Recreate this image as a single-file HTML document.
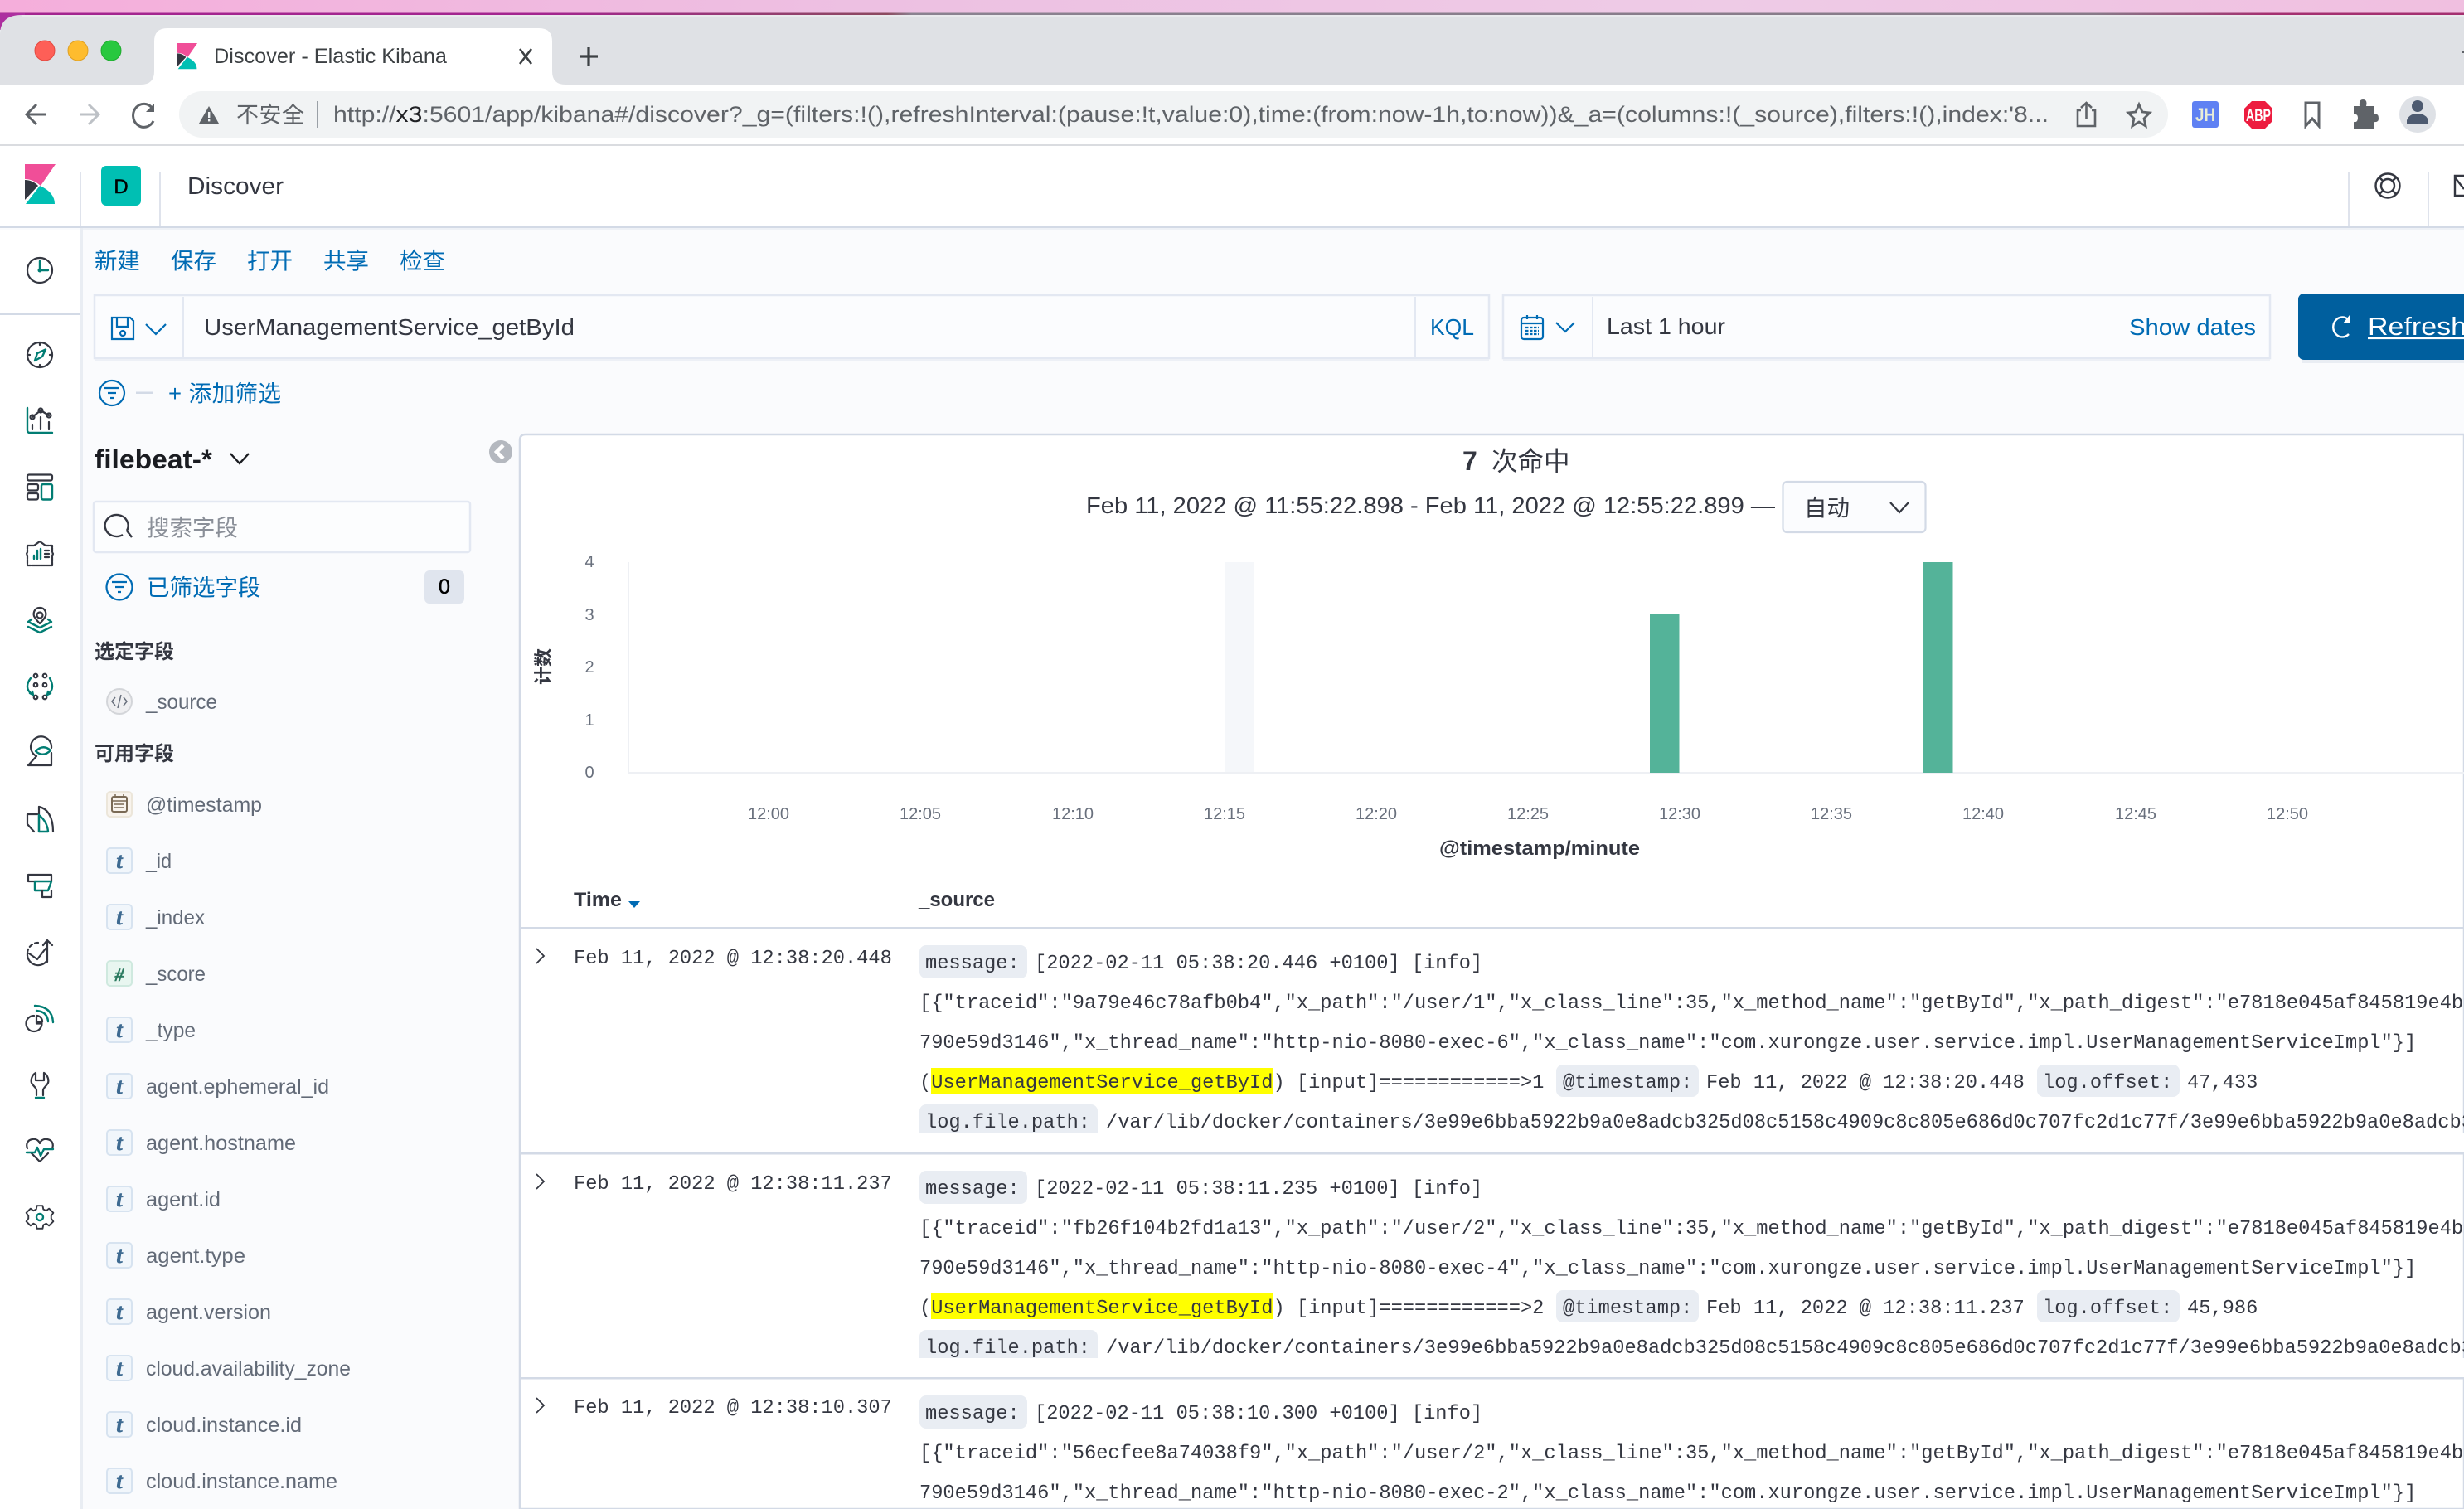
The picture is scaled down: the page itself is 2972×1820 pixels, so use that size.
<!DOCTYPE html>
<html lang="zh">
<head>
<meta charset="utf-8">
<title>Discover - Elastic Kibana</title>
<style>
html,body{margin:0;padding:0;background:#fafbfd;overflow:hidden;width:2972px;height:1820px}
svg{display:block}
text{font-family:"Liberation Sans","Noto Sans CJK SC",sans-serif;white-space:pre}
.m{font-family:"Liberation Mono","Noto Sans CJK SC",monospace;font-size:23.7px;fill:#343741}
.f{font-size:25px;fill:#626a77}
.ax{font-size:20px;fill:#69707d}
.box{fill:#f1f6fb;stroke:#d7e3f0;stroke-width:2}
.tt{font-family:"Liberation Serif",serif;font-weight:bold;font-style:italic;font-size:27px;fill:#3d6a91;stroke:#3d6a91;stroke-width:.5px}
.tag{fill:#e9edf3}
.d{fill:none;stroke:#343741;stroke-width:2.2;stroke-linecap:round;stroke-linejoin:round}
.g{fill:none;stroke:#017d73;stroke-width:2.4;stroke-linecap:round;stroke-linejoin:round}
</style>
</head>
<body>
<svg width="2972" height="1820" viewBox="0 0 2972 1820" xmlns="http://www.w3.org/2000/svg">
<defs>
<linearGradient id="pk" x1="0" x2="1" y1="0" y2="0">
<stop offset="0" stop-color="#f5aedb"/><stop offset=".35" stop-color="#edc0e2"/><stop offset=".7" stop-color="#eecbe6"/><stop offset="1" stop-color="#f0bfe0"/>
</linearGradient>
<linearGradient id="ln" x1="0" x2="1" y1="0" y2="0">
<stop offset="0" stop-color="#a3258f"/><stop offset=".22" stop-color="#a3258f"/><stop offset=".36" stop-color="#8c4a60"/><stop offset=".37" stop-color="#8a8290"/><stop offset=".85" stop-color="#877a88"/><stop offset=".92" stop-color="#a43070"/><stop offset="1" stop-color="#a43070"/>
</linearGradient>
</defs>

<!-- desktop strip -->
<rect width="2972" height="20" fill="url(#pk)"/>
<rect y="15.500" width="2972" height="2.500" fill="url(#ln)"/>
<rect y="16" width="30" height="20" fill="#ad2f9f"/>
<!-- chrome tab strip -->
<path d="M0 102V42Q0 18 26 18H2972V102Z" fill="#dfe1e5"/>
<rect y="18" x="26" width="2946" height="2" fill="#e9eaed"/>
<circle cx="54" cy="61" r="12" fill="#fe5f57" stroke="#e2483f" stroke-width="1"/>
<circle cx="94" cy="61" r="12" fill="#febc2e" stroke="#dfa023" stroke-width="1"/>
<circle cx="134" cy="61" r="12" fill="#28c83f" stroke="#1fab2f" stroke-width="1"/>
<path d="M170 102Q186 102 186 86V50Q186 34 202 34H650Q666 34 666 50V86Q666 102 682 102Z" fill="#fff"/>
<!-- favicon -->
<g transform="translate(214 52) scale(.65)">
<path d="M0 0H37L19 26Q10 18 0 18Z" fill="#f04e98"/>
<path d="M0 19Q9 19 16 26L0 43Z" fill="#343741"/>
<path d="M1 48L18 26Q36 34 36 48Z" fill="#00bfb3"/>
</g>
<text x="258" y="76" font-size="25" fill="#3c4043" textLength="281" lengthAdjust="spacingAndGlyphs">Discover - Elastic Kibana</text>
<path d="M627 59L641 77M641 59L627 77" fill="none" stroke="#3c4043" stroke-width="2.600"/>
<path d="M710 57V79M699 68H721" fill="none" stroke="#3c4043" stroke-width="3.200"/>
<rect x="2970" y="61" width="2" height="3" fill="#5f6368"/>

<!-- toolbar -->
<rect y="102" width="2972" height="72" fill="#fff"/>
<rect y="174" width="2972" height="2" fill="#dadce0"/>
<path d="M56 138H33M44 126L32 138L44 150" fill="none" stroke="#5f6368" stroke-width="3"/>
<path d="M96 138H119M107 126L119 138L107 150" fill="none" stroke="#bdc1c6" stroke-width="3"/>
<path d="M184 131A13 14 0 1 0 185 146" fill="none" stroke="#5f6368" stroke-width="3"/>
<path d="M186 125V135H176Z" fill="#5f6368"/>
<rect x="216" y="110" width="2399" height="56" rx="28" fill="#f1f3f4"/>
<path d="M252 128L264 149H240Z" fill="#5f6368"/>
<rect x="251" y="135" width="2.400" height="7" fill="#f1f3f4"/><rect x="251" y="144" width="2.400" height="2.400" fill="#f1f3f4"/>
<text x="285" y="148" font-size="27" fill="#5f6368" textLength="82">不安全</text>
<rect x="382" y="122" width="2" height="32" fill="#9aa0a6"/>
<text x="402" y="147" font-size="27" fill="#5f6368" textLength="2069" lengthAdjust="spacingAndGlyphs">http://<tspan fill="#202124">x3</tspan>:5601/app/kibana#/discover?_g=(filters:!(),refreshInterval:(pause:!t,value:0),time:(from:now-1h,to:now))&amp;_a=(columns:!(_source),filters:!(),index:'8...</text>
<path d="M2510 133H2506V152H2527V133H2523M2516.500 143V125M2510 130L2516.500 124L2523 130" fill="none" stroke="#5f6368" stroke-width="2.600"/>
<path d="M2580 126L2584 135L2593 136L2586 143L2588 152L2580 147L2572 152L2574 143L2567 136L2576 135Z" fill="none" stroke="#5f6368" stroke-width="2.800"/>
<rect x="2644" y="122" width="32" height="32" rx="3" fill="#5f81f3"/>
<text x="2660" y="146" font-size="22" font-weight="bold" fill="#e9edd7" text-anchor="middle" textLength="24" lengthAdjust="spacingAndGlyphs">JH</text>
<path d="M2716 122H2732L2741 131V146L2732 155H2716L2707 146V131Z" fill="#ed1c3f"/>
<text x="2724" y="146" font-size="21" font-weight="bold" fill="#fff" text-anchor="middle" textLength="30" lengthAdjust="spacingAndGlyphs">ABP</text>
<path d="M2781 124H2797V152L2789 143L2781 152Z" fill="none" stroke="#5f6368" stroke-width="3"/>
<path d="M2839 131H2846Q2845 123 2850 123Q2856 123 2854 131H2863V141Q2869 139 2869 146Q2869 151 2863 150V159H2839V150Q2844 151 2844 145Q2844 140 2839 141Z" fill="#5f6368" transform="translate(0 -3)"/>
<circle cx="2916" cy="138" r="22" fill="#dee1e6"/>
<circle cx="2916" cy="128" r="7" fill="#4d5a70"/>
<path d="M2903 150V145Q2906 137 2916 137Q2926 137 2929 145V150Z" fill="#4d5a70"/>

<!-- kibana header -->
<rect y="176" width="2972" height="96" fill="#fff"/>
<rect y="272" width="2972" height="3" fill="#d3dae6"/>
<rect y="275" x="97" width="2875" height="3" fill="#eef1f6"/>
<g transform="translate(30 198)">
<path d="M0 0H37L19 26Q10 18 0 18Z" fill="#f04e98"/>
<path d="M0 19Q9 19 16 26L0 43Z" fill="#343741"/>
<path d="M1 48L18 26Q36 34 36 48Z" fill="#00bfb3"/>
</g>
<rect x="96" y="208" width="2" height="64" fill="#dfe3ec"/>
<rect x="192" y="208" width="2" height="64" fill="#dfe3ec"/>
<rect x="122" y="200" width="48" height="48" rx="6" fill="#00bfb3"/>
<text x="146" y="233" font-size="24" fill="#000" stroke="#000" stroke-width=".4" text-anchor="middle">D</text>
<text x="226" y="234" font-size="28.500" fill="#343741" textLength="116" lengthAdjust="spacingAndGlyphs">Discover</text>
<rect x="2832" y="208" width="2" height="64" fill="#dfe3ec"/>
<rect x="2928" y="208" width="2" height="64" fill="#dfe3ec"/>
<circle cx="2880" cy="224" r="14.500" fill="none" stroke="#343741" stroke-width="2.400"/>
<circle cx="2880" cy="224" r="8" fill="none" stroke="#343741" stroke-width="2.400"/>
<path d="M2870 214L2875 219M2890 214L2885 219M2870 234L2875 229M2890 234L2885 229" stroke="#343741" stroke-width="2.400"/>
<path d="M2972 212H2961V236H2972M2961 214L2972 228" fill="none" stroke="#343741" stroke-width="2.400"/>

<!-- left nav -->
<rect y="278" width="97" height="1542" fill="#fff"/>
<rect x="97" y="275" width="3" height="1545" fill="#e9edf3"/>
<rect y="377" width="97" height="3" fill="#d3dae6"/>

<!-- recent -->
<circle cx="48" cy="326" r="15" class="d"/>
<path d="M48 315V326H58" class="g"/><circle cx="48" cy="326" r="2.500" fill="#017d73"/>
<!-- discover -->
<circle cx="48" cy="428" r="15" class="d"/>
<path d="M48 413V416M48 440V443M33 428H36M60 428H63" class="d"/>
<path d="M55 421.500L51 430L42 435L45 426Z" class="g"/>
<!-- visualize -->
<path d="M33 492V519Q33 522 36 522H63" class="g"/>
<path d="M39 503L49 495L59 501" class="d"/>
<circle cx="39" cy="503" r="2.500" class="d"/><circle cx="49" cy="495" r="2.500" class="d"/><circle cx="59" cy="501" r="2.500" class="d"/>
<path d="M39 512V518M49 503V518M59 509V518" class="d"/>
<!-- dashboard -->
<rect x="33" y="572.500" width="30" height="7" rx="2" class="d"/>
<rect x="33" y="584" width="13" height="7.500" rx="2" class="d"/>
<rect x="33" y="595" width="13" height="7.500" rx="2" class="d"/>
<rect x="50" y="584" width="13" height="18.500" rx="2" class="g"/>
<!-- canvas -->
<path d="M33 658H41L48 653L55 658H63V666L64 668L63 670V682H33V670L32 668L33 666Z" class="d" stroke-dasharray="5 1"/>
<path d="M41 670V674M45 664V674M49 662V674" class="g"/>
<path d="M54 664H59M54 668H59M54 672H59" class="d"/>
<!-- maps -->
<path d="M48 733C41 733 40 740 41 743C43 747 48 752 48 752C48 752 53 747 55 743C56 740 55 733 48 733Z" class="d"/>
<circle cx="48" cy="742" r="3.500" class="d"/>
<path d="M38 747L34 750L48 757L62 750L58 747M34 756L48 763L62 756" class="g"/>
<!-- ml -->
<circle cx="43" cy="815" r="2.300" class="d"/><circle cx="54" cy="815" r="2.300" class="d"/>
<circle cx="43" cy="826" r="2.300" class="d"/><circle cx="54" cy="826" r="2.300" class="d"/>
<circle cx="43" cy="841" r="2.300" class="d"/><circle cx="54" cy="841" r="2.300" class="d"/>
<path d="M37 818Q33 823 33 828Q33 834 40 838M36 836L40 838L39 834M60 818Q63 823 63 828Q63 834 57 838M61 836L57 838L58 834" class="g"/>
<!-- graph -->
<path d="M62 908V923H34L44 912A12.500 12.500 0 1 1 62 902" class="d"/>
<path d="M43 906Q52 897 61 905Q52 914 43 906Z" class="g"/>
<!-- apm -->
<path d="M45 982H33V994L41 1003" class="d"/>
<path d="M47 973C57 975 64 985 64 1003" class="d"/>
<path d="M47 973V1003" class="d"/>
<path d="M47 983V1003H58Q57 991 47 983Z" class="g"/>
<!-- uptime -->
<path d="M34 1055H62V1063M34 1055V1063H42" class="d"/>
<path d="M42 1063H62L58 1074H42Z" class="g"/>
<path d="M51 1074V1082H62V1074" class="d"/>
<!-- siem -->
<path d="M46 1137A13 13 0 0 0 33 1150" class="d" stroke-dasharray="4 3.500"/>
<path d="M33 1150A13 13 0 0 0 57 1158" class="d"/>
<path d="M35 1150L45 1157L55 1144" class="d"/>
<path d="M57 1160V1134M52 1140L57 1134L63 1140" class="d"/>
<!-- infrastructure -->
<path d="M41 1225A9.500 9.500 0 1 0 50.500 1234.500H44V1225" class="d"/>
<path d="M44 1225A7 7 0 0 1 51 1232.500H44" class="d"/>
<path d="M42 1213Q63 1214 64 1233M44 1219Q57 1220 58 1232" class="g"/>
<!-- dev tools -->
<path d="M43 1294C38 1297 37 1303 38 1306C40 1310 44 1312 44 1315V1321M53 1294C58 1297 59 1303 58 1306C56 1310 52 1312 52 1315V1321M43 1294V1303H53V1294" class="d"/>
<path d="M43 1324H53" class="g"/>
<!-- monitoring -->
<path d="M33 1385C31 1380 33 1375 39 1374C44 1373 47 1376 48 1379C49 1376 52 1373 57 1374C63 1375 65 1380 63 1385" class="d"/>
<path d="M38 1391L48 1401L58 1391" class="d"/>
<path d="M32 1390H42L45 1384L49 1394L53 1386H64" class="g"/>
<!-- settings -->
<path d="M44 1452H52L53 1457L57 1459L61 1456L67 1462L64 1466V1470L67 1474L61 1480L57 1477L53 1479L52 1484H44L43 1479L39 1477L35 1480L29 1474L32 1470V1466L29 1462L35 1456L39 1459L43 1457Z" class="d" transform="translate(48 1468) scale(.86) translate(-48 -1468)"/>
<circle cx="48" cy="1468" r="4" class="g"/>

<!-- top menu -->
<g font-size="27.500" fill="#006bb4">
<text x="114" y="324">新建</text><text x="206" y="324">保存</text><text x="298" y="324">打开</text><text x="390" y="324">共享</text><text x="482" y="324">检查</text>
</g>

<!-- query bar -->
<rect x="114" y="356" width="1682" height="76" fill="#fbfcfe" stroke="#e3e8f2" stroke-width="2.500"/>
<rect x="114" y="433" width="1682" height="3" fill="#edf0f6"/>
<rect x="220" y="358" width="2" height="72" fill="#e3e8f2"/>
<rect x="1706" y="358" width="2" height="72" fill="#e3e8f2"/>
<path d="M135 383H157L161 387V409H135ZM141 383V394H154V383M148 399A3 3 0 1 0 148.100 405A3 3 0 1 0 148 399Z" fill="none" stroke="#006bb4" stroke-width="2.200"/>
<path d="M176 391L188 403L200 391" fill="none" stroke="#006bb4" stroke-width="2.200"/>
<text x="246" y="404" font-size="28" fill="#343741" textLength="447" lengthAdjust="spacingAndGlyphs">UserManagementService_getById</text>
<text x="1725" y="404" font-size="28" fill="#006bb4" textLength="53" lengthAdjust="spacingAndGlyphs">KQL</text>

<rect x="1813" y="356" width="925" height="76" fill="#fbfcfe" stroke="#e3e8f2" stroke-width="2.500"/>
<rect x="1813" y="433" width="925" height="3" fill="#edf0f6"/>
<rect x="1920" y="358" width="2" height="72" fill="#e3e8f2"/>
<rect x="1835" y="383" width="26" height="26" rx="3" fill="none" stroke="#006bb4" stroke-width="2.200"/>
<path d="M1835 390H1861M1842 380V385M1854 380V385" fill="none" stroke="#006bb4" stroke-width="2.200"/>
<path d="M1840 395H1856M1840 399H1856M1840 403H1856" fill="none" stroke="#006bb4" stroke-width="2.200" stroke-dasharray="3.500 1.500"/>
<path d="M1877 389L1888 400L1899 389" fill="none" stroke="#006bb4" stroke-width="2.200"/>
<text x="1938" y="403" font-size="28" fill="#343741" textLength="143" lengthAdjust="spacingAndGlyphs">Last 1 hour</text>
<text x="2568" y="404" font-size="28" fill="#006bb4" textLength="153" lengthAdjust="spacingAndGlyphs">Show dates</text>
<!-- refresh -->
<rect x="2772" y="354" width="230" height="80" rx="7" fill="#005f9e"/>
<rect x="2776" y="434" width="196" height="4" fill="#e9edf3"/>
<path d="M2832 385A11 12 0 1 0 2833 403" fill="none" stroke="#fff" stroke-width="2.400"/>
<path d="M2834 380V390H2826" fill="#fff"/>
<text x="2856" y="404" font-size="31" fill="#fff" textLength="119" lengthAdjust="spacingAndGlyphs" style="text-decoration:underline">Refresh</text>

<!-- filter row -->
<circle cx="135" cy="474" r="15" fill="none" stroke="#006bb4" stroke-width="2.200"/>
<path d="M126 468H144M130 474H140M133 480H137" fill="none" stroke="#006bb4" stroke-width="2.200"/>
<rect x="164" y="472.500" width="20" height="2.500" fill="#d3dae6"/>
<text x="203" y="484" font-size="27.500" fill="#006bb4" textLength="136">+ 添加筛选</text>

<!-- sidebar -->
<text x="114" y="565" font-size="32" font-weight="bold" fill="#1a1c21" textLength="142" lengthAdjust="spacingAndGlyphs">filebeat-*</text>
<path d="M278 547L289 559L300 547" fill="none" stroke="#1a1c21" stroke-width="2.400"/>
<circle cx="604" cy="545" r="14" fill="#b4b8bf"/>
<path d="M607 537L599 545L607 553" fill="none" stroke="#fff" stroke-width="4.500"/>
<rect x="113" y="605" width="454" height="61" rx="3" fill="#fcfdfe" stroke="#e3e8f2" stroke-width="2.500"/>
<path d="M148 645A14 13 0 1 1 153 640M153 640L159 648" fill="none" stroke="#343741" stroke-width="2.400"/>
<text x="177" y="646" font-size="27.500" fill="#8a8f98">搜索字段</text>
<circle cx="144" cy="708" r="15.500" fill="none" stroke="#006bb4" stroke-width="2.200"/>
<path d="M135 702H153M139 708H149M142 714H146" fill="none" stroke="#006bb4" stroke-width="2.200"/>
<text x="177" y="718" font-size="27.500" fill="#006bb4">已筛选字段</text>
<rect x="512" y="688" width="48" height="40" rx="6" fill="#e0e5ee"/>
<text x="536" y="716" font-size="25" fill="#000" stroke="#000" stroke-width=".5" text-anchor="middle">0</text>
<text x="114" y="794" font-size="24" font-weight="bold" fill="#343741">选定字段</text>
<circle cx="144" cy="846" r="15" fill="#efeff1" stroke="#d3d5d9" stroke-width="2"/>
<path d="M139 841L135 846L139 851M149 841L153 846L149 851M146 838L142 854" fill="none" stroke="#69707d" stroke-width="1.500"/>
<text x="176" y="855" class="f" textLength="86" lengthAdjust="spacingAndGlyphs">_source</text>
<text x="114" y="917" font-size="24" font-weight="bold" fill="#343741">可用字段</text>

<rect x="129" y="955" width="30" height="30" rx="4" fill="#f8f3ec" stroke="#ece6da" stroke-width="2"/>
<rect x="135" y="961" width="18" height="18" rx="2" fill="none" stroke="#7a6a55" stroke-width="2"/>
<path d="M135 966H153M139 958V962M149 958V962M138 970H150M138 974H150" fill="none" stroke="#7a6a55" stroke-width="1.500"/>
<text x="176" y="979" class="f" textLength="140" lengthAdjust="spacingAndGlyphs">@timestamp</text>

<g><rect x="129" y="1023" width="30" height="30" rx="4" class="box"/><text x="144" y="1047" class="tt" text-anchor="middle">t</text><text x="176" y="1047" class="f" textLength="31" lengthAdjust="spacingAndGlyphs">_id</text></g>
<g><rect x="129" y="1091" width="30" height="30" rx="4" class="box"/><text x="144" y="1115" class="tt" text-anchor="middle">t</text><text x="176" y="1115" class="f" textLength="71" lengthAdjust="spacingAndGlyphs">_index</text></g>
<g><rect x="129" y="1159" width="30" height="30" rx="4" fill="#e8f6f0" stroke="#cfe9df" stroke-width="2"/><text x="144" y="1183" class="tt" text-anchor="middle" style="fill:#2a7a5f;stroke:#2a7a5f;font-size:22px">#</text><text x="176" y="1183" class="f" textLength="72" lengthAdjust="spacingAndGlyphs">_score</text></g>
<g><rect x="129" y="1227" width="30" height="30" rx="4" class="box"/><text x="144" y="1251" class="tt" text-anchor="middle">t</text><text x="176" y="1251" class="f" textLength="60" lengthAdjust="spacingAndGlyphs">_type</text></g>
<g><rect x="129" y="1295" width="30" height="30" rx="4" class="box"/><text x="144" y="1319" class="tt" text-anchor="middle">t</text><text x="176" y="1319" class="f" textLength="221" lengthAdjust="spacingAndGlyphs">agent.ephemeral_id</text></g>
<g><rect x="129" y="1363" width="30" height="30" rx="4" class="box"/><text x="144" y="1387" class="tt" text-anchor="middle">t</text><text x="176" y="1387" class="f" textLength="181" lengthAdjust="spacingAndGlyphs">agent.hostname</text></g>
<g><rect x="129" y="1431" width="30" height="30" rx="4" class="box"/><text x="144" y="1455" class="tt" text-anchor="middle">t</text><text x="176" y="1455" class="f" textLength="90" lengthAdjust="spacingAndGlyphs">agent.id</text></g>
<g><rect x="129" y="1499" width="30" height="30" rx="4" class="box"/><text x="144" y="1523" class="tt" text-anchor="middle">t</text><text x="176" y="1523" class="f" textLength="120" lengthAdjust="spacingAndGlyphs">agent.type</text></g>
<g><rect x="129" y="1567" width="30" height="30" rx="4" class="box"/><text x="144" y="1591" class="tt" text-anchor="middle">t</text><text x="176" y="1591" class="f" textLength="151" lengthAdjust="spacingAndGlyphs">agent.version</text></g>
<g><rect x="129" y="1635" width="30" height="30" rx="4" class="box"/><text x="144" y="1659" class="tt" text-anchor="middle">t</text><text x="176" y="1659" class="f" textLength="247" lengthAdjust="spacingAndGlyphs">cloud.availability_zone</text></g>
<g><rect x="129" y="1703" width="30" height="30" rx="4" class="box"/><text x="144" y="1727" class="tt" text-anchor="middle">t</text><text x="176" y="1727" class="f" textLength="188" lengthAdjust="spacingAndGlyphs">cloud.instance.id</text></g>
<g><rect x="129" y="1771" width="30" height="30" rx="4" class="box"/><text x="144" y="1795" class="tt" text-anchor="middle">t</text><text x="176" y="1795" class="f" textLength="231" lengthAdjust="spacingAndGlyphs">cloud.instance.name</text></g>

<!-- main panel -->
<path d="M627 1820V531Q627 524 634 524H2972V1820Z" fill="#fff" stroke="#d3dae6" stroke-width="2.500"/>

<text x="1764" y="567" font-size="32" font-weight="bold" fill="#343741">7</text>
<text x="1799" y="567" font-size="31.500" fill="#343741">次命中</text>
<text x="1310" y="619" font-size="28" fill="#343741" textLength="831" lengthAdjust="spacingAndGlyphs">Feb 11, 2022 @ 11:55:22.898 - Feb 11, 2022 @ 12:55:22.899 —</text>
<rect x="2150.500" y="581" width="172" height="61" rx="5" fill="#fbfcfe" stroke="#d3dae6" stroke-width="2.200"/>
<text x="2176" y="622" font-size="27.500" fill="#343741">自动</text>
<path d="M2280 606L2291 618L2302 606" fill="none" stroke="#343741" stroke-width="2.200"/>

<!-- chart -->
<g>
<text x="711" y="684" text-anchor="middle" class="ax">4</text>
<text x="711" y="748" text-anchor="middle" class="ax">3</text>
<text x="711" y="811" text-anchor="middle" class="ax">2</text>
<text x="711" y="875" text-anchor="middle" class="ax">1</text>
<text x="711" y="938" text-anchor="middle" class="ax">0</text>
</g>
<text transform="translate(663 804) rotate(-90)" text-anchor="middle" font-size="22" font-weight="bold" fill="#343741">计数</text>
<rect x="757" y="678" width="2" height="254" fill="#eef0f4"/>
<rect x="1477" y="678" width="36" height="253" fill="#f5f7fa"/>
<rect x="757" y="931" width="2215" height="2" fill="#eef0f4"/>
<rect x="1990" y="741" width="35.500" height="191" fill="#54b399"/>
<rect x="2320" y="678" width="35.500" height="254" fill="#54b399"/>
<g text-anchor="middle">
<text x="927" y="988" class="ax">12:00</text><text x="1110" y="988" class="ax">12:05</text><text x="1294" y="988" class="ax">12:10</text><text x="1477" y="988" class="ax">12:15</text><text x="1660" y="988" class="ax">12:20</text><text x="1843" y="988" class="ax">12:25</text><text x="2026" y="988" class="ax">12:30</text><text x="2209" y="988" class="ax">12:35</text><text x="2392" y="988" class="ax">12:40</text><text x="2576" y="988" class="ax">12:45</text><text x="2759" y="988" class="ax">12:50</text>
</g>
<text x="1857" y="1031" text-anchor="middle" font-size="24" font-weight="bold" fill="#343741" textLength="242" lengthAdjust="spacingAndGlyphs">@timestamp/minute</text>

<!-- table head -->
<text x="692" y="1093" font-size="24" font-weight="bold" fill="#343741" textLength="58" lengthAdjust="spacingAndGlyphs">Time</text>
<path d="M758 1087H772L765 1095Z" fill="#006bb4"/>
<text x="1108" y="1093" font-size="24" font-weight="bold" fill="#343741" textLength="92" lengthAdjust="spacingAndGlyphs">_source</text>
<rect x="628" y="1118" width="2344" height="2.500" fill="#d3dae6"/>
<rect x="628" y="1390" width="2344" height="2.500" fill="#d3dae6"/>
<rect x="628" y="1661" width="2344" height="2.500" fill="#d3dae6"/>

<!-- row 1 -->
<g>
<path d="M647 1144L656 1153L647 1162" fill="none" stroke="#343741" stroke-width="1.800"/>
<text x="692" y="1162" class="m">Feb 11, 2022 @ 12:38:20.448</text>
<rect x="1109" y="1140" width="130" height="40" rx="8" class="tag"/>
<text x="1116" y="1168" class="m">message:</text><text x="1248" y="1168" class="m">[2022-02-11 05:38:20.446 +0100] [info]</text>
<text x="1109" y="1216" class="m">[{"traceid":"9a79e46c78afb0b4","x_path":"/user/1","x_class_line":35,"x_method_name":"getById","x_path_digest":"e7818e045af845819e4b1a</text>
<text x="1109" y="1264" class="m">790e59d3146","x_thread_name":"http-nio-8080-exec-6","x_class_name":"com.xurongze.user.service.impl.UserManagementServiceImpl"}]</text>
<rect x="1123" y="1288" width="413" height="31" fill="#ff0"/>
<text x="1109" y="1312" class="m">(UserManagementService_getById) [input]============&gt;1</text>
<rect x="1877" y="1284" width="172" height="39" rx="8" class="tag"/><text x="1885" y="1312" class="m">@timestamp:</text>
<text x="2058" y="1312" class="m">Feb 11, 2022 @ 12:38:20.448</text>
<rect x="2457" y="1284" width="172" height="39" rx="8" class="tag"/><text x="2464" y="1312" class="m">log.offset:</text>
<text x="2638" y="1312" class="m">47,433</text>
<rect x="1109" y="1332" width="215" height="50" rx="8" class="tag"/>
<text x="1116" y="1360" class="m">log.file.path:</text>
<text x="1334" y="1360" class="m">/var/lib/docker/containers/3e99e6bba5922b9a0e8adcb325d08c5158c4909c8c805e686d0c707fc2d1c77f/3e99e6bba5922b9a0e8adcb3</text>
<rect x="1100" y="1366" width="1872" height="24" fill="#fff"/>
</g>
<!-- row 2 -->
<g>
<path d="M647 1416L656 1425L647 1434" fill="none" stroke="#343741" stroke-width="1.800"/>
<text x="692" y="1434" class="m">Feb 11, 2022 @ 12:38:11.237</text>
<rect x="1109" y="1412" width="130" height="40" rx="8" class="tag"/>
<text x="1116" y="1440" class="m">message:</text><text x="1248" y="1440" class="m">[2022-02-11 05:38:11.235 +0100] [info]</text>
<text x="1109" y="1488" class="m">[{"traceid":"fb26f104b2fd1a13","x_path":"/user/2","x_class_line":35,"x_method_name":"getById","x_path_digest":"e7818e045af845819e4b1a</text>
<text x="1109" y="1536" class="m">790e59d3146","x_thread_name":"http-nio-8080-exec-4","x_class_name":"com.xurongze.user.service.impl.UserManagementServiceImpl"}]</text>
<rect x="1123" y="1560" width="413" height="31" fill="#ff0"/>
<text x="1109" y="1584" class="m">(UserManagementService_getById) [input]============&gt;2</text>
<rect x="1877" y="1556" width="172" height="39" rx="8" class="tag"/><text x="1885" y="1584" class="m">@timestamp:</text>
<text x="2058" y="1584" class="m">Feb 11, 2022 @ 12:38:11.237</text>
<rect x="2457" y="1556" width="172" height="39" rx="8" class="tag"/><text x="2464" y="1584" class="m">log.offset:</text>
<text x="2638" y="1584" class="m">45,986</text>
<rect x="1109" y="1604" width="215" height="50" rx="8" class="tag"/>
<text x="1116" y="1632" class="m">log.file.path:</text>
<text x="1334" y="1632" class="m">/var/lib/docker/containers/3e99e6bba5922b9a0e8adcb325d08c5158c4909c8c805e686d0c707fc2d1c77f/3e99e6bba5922b9a0e8adcb3</text>
<rect x="1100" y="1638" width="1872" height="23" fill="#fff"/>
</g>
<!-- row 3 -->
<g>
<path d="M647 1686L656 1695L647 1704" fill="none" stroke="#343741" stroke-width="1.800"/>
<text x="692" y="1704" class="m">Feb 11, 2022 @ 12:38:10.307</text>
<rect x="1109" y="1683" width="130" height="40" rx="8" class="tag"/>
<text x="1116" y="1711" class="m">message:</text><text x="1248" y="1711" class="m">[2022-02-11 05:38:10.300 +0100] [info]</text>
<text x="1109" y="1759" class="m">[{"traceid":"56ecfee8a74038f9","x_path":"/user/2","x_class_line":35,"x_method_name":"getById","x_path_digest":"e7818e045af845819e4b1a</text>
<text x="1109" y="1807" class="m">790e59d3146","x_thread_name":"http-nio-8080-exec-2","x_class_name":"com.xurongze.user.service.impl.UserManagementServiceImpl"}]</text>
</g>
</svg>
</body>
</html>
